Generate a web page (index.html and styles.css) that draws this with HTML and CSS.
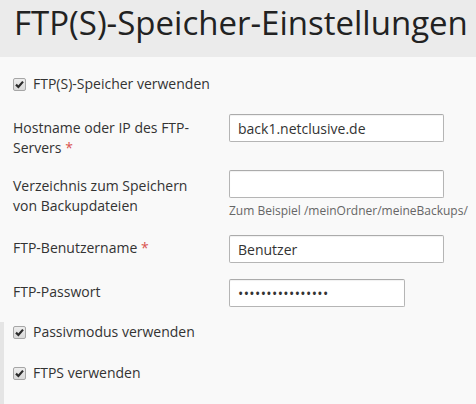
FILE: index.html
```html
<!DOCTYPE html>
<html lang="de">
<head>
<meta charset="utf-8">
<link rel="stylesheet" href="styles.css">
</head>
<body>
<header class="head"><h1 class="title">FTP(S)-Speicher-Einstellungen</h1></header>
<main class="content">
  <label class="check first"><span class="cb"><svg width="13" height="13" viewBox="0 0 13 13"><path d="M3 6.6 L5.4 9 L10 3.6" fill="none" stroke="#2b2b2b" stroke-width="2.2"/></svg></span><span>FTP(S)-Speicher verwenden</span></label>
  <div class="row r1">
    <div class="lbl">Hostname oder IP des FTP-Servers <span class="req">*</span></div>
    <div class="field"><input class="inp" type="text" value="back1.netclusive.de"></div>
  </div>
  <div class="row r2">
    <div class="lbl">Verzeichnis zum Speichern von Backupdateien</div>
    <div class="field"><input class="inp" type="text" value=""><div class="help">Zum Beispiel /meinOrdner/meineBackups/</div></div>
  </div>
  <div class="row r3">
    <div class="lbl">FTP-Benutzername <span class="req">*</span></div>
    <div class="field"><input class="inp" type="text" value="Benutzer"></div>
  </div>
  <div class="row r4">
    <div class="lbl">FTP-Passwort</div>
    <div class="field"><input class="inp pw" type="password" value="xxxxxxxxxxxxxxxx"></div>
  </div>
  <section class="lower">
    <label class="check"><span class="cb"><svg width="13" height="13" viewBox="0 0 13 13"><path d="M3 6.6 L5.4 9 L10 3.6" fill="none" stroke="#2b2b2b" stroke-width="2.2"/></svg></span><span>Passivmodus verwenden</span></label>
    <label class="check"><span class="cb"><svg width="13" height="13" viewBox="0 0 13 13"><path d="M3 6.6 L5.4 9 L10 3.6" fill="none" stroke="#2b2b2b" stroke-width="2.2"/></svg></span><span>FTPS verwenden</span></label>
  </section>
</main>
</body>
</html>
```
FILE: styles.css
```css
* { box-sizing: border-box; }
html, body { margin: 0; padding: 0; }
body {
  background: #f9f9f9;
  font-family: "Open Sans", sans-serif;
  color: #333;
  width: 476px;
  height: 404px;
  overflow: hidden;
}
.head {
  background: #ebebeb;
  height: 57px;
  padding: 0 0 0 14px;
}
.title {
  margin: 0;
  font-size: 33px;
  font-weight: 400;
  line-height: 45px;
  color: #222;
  white-space: nowrap;
}
.content {
  padding: 0 0 0 13px;
  font-size: 14px;
}
.check {
  display: flex;
  align-items: center;
  gap: 7px;
  height: 20px;
  line-height: 20px;
}
.cb {
  display: block;
  width: 13px;
  height: 13px;
  border: 1px solid #a6a6a6;
  border-radius: 2px;
  background: linear-gradient(#ededed, #d9d9d9);
  position: relative;
}
.cb svg {
  display: block;
  margin: -1px 0 0 -1px;
}
.first { margin-top: 17px; }
.row {
  display: flex;
  align-items: flex-start;
}
.lbl {
  width: 216px;
  padding-right: 20px;
  line-height: 20px;
}
.req { color: #d9534f; }
.field { width: 215px; }
.inp {
  display: block;
  width: 215px;
  height: 28px;
  border: 1px solid #b5b5b5;
  border-top-color: #ababab;
  border-radius: 2px;
  background: #fff;
  box-shadow: inset 0 1px 1px rgba(0,0,0,0.06);
  font-family: "Open Sans", sans-serif;
  font-size: 14px;
  color: #333;
  padding: 0 8px;
  margin: 0;
  outline: none;
}
.pw { width: 176px; letter-spacing: 0.4px; }
.help {
  font-size: 12px;
  color: #666;
  margin-top: 5px;
  white-space: nowrap;
  line-height: 16px;
}
.r1 { margin-top: 20px; }
.r1 .lbl { margin-top: 4px; }
.r2 { margin-top: 12px; }
.r2 .lbl { margin-top: 6px; }
.r3 { margin-top: 16px; }
.r3 .lbl { margin-top: 3px; }
.r4 { margin-top: 16px; }
.r4 .lbl { margin-top: 3px; }
.lower {
  margin: 15px 0 0 -13px;
  padding: 0 0 0 9px;
  border-left: 4px solid #e5e5e5;
  min-height: 90px;
}
.lower .check { margin-bottom: 21px; }
```
